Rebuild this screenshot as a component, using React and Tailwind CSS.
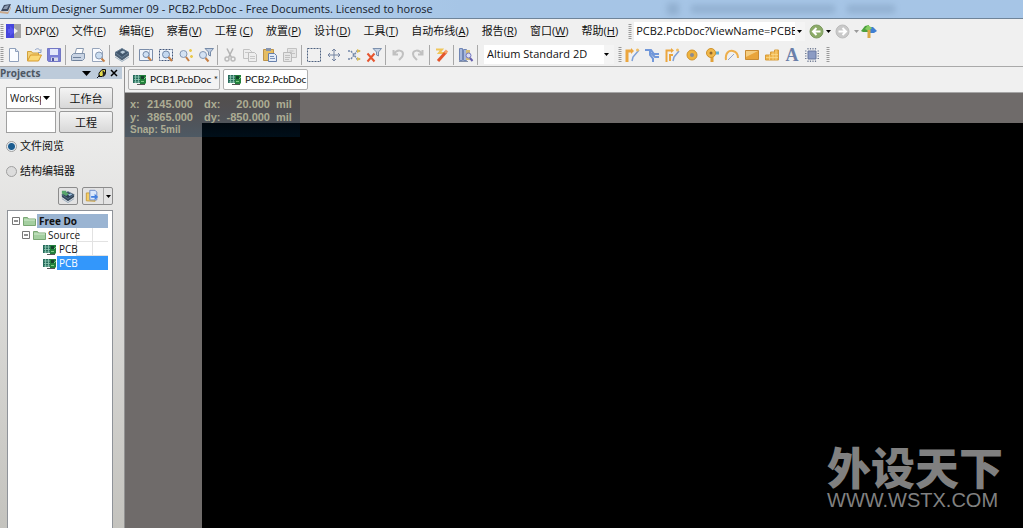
import { useState } from "react";

const icons = {
  newFile: (
    <>
      <path d="M3.500 1.500h6l3 3v10h-9z" fill="#fbfdff" stroke="#8fa0bb" />
      <path d="M9.500 1.500v3h3" fill="#d9e3f1" stroke="#8fa0bb" />
    </>
  ),
  open: (
    <>
      <path d="M1.500 13.500v-9h4l1 1.500h6v3" fill="#f3d27a" stroke="#d2a23c" />
      <path d="M1.500 14l3-6h11l-3 6z" fill="#fbd977" stroke="#d79a2d" />
      <path d="M9 3c2-2 4-1.500 5 .5l1-1v3h-3" fill="none" stroke="#8a9fc4" />
    </>
  ),
  save: (
    <>
      <path d="M1.500 1.500h13v13h-12l-1-1z" fill="#7b80d6" stroke="#7277c4" />
      <path d="M4 2h8v6H4z" fill="#e4e8fa" />
      <path d="M5 10.500h7V14H5z" fill="#d8dbe8" />
      <path d="M6 11h2v3H6z" fill="#5056a5" />
    </>
  ),
  print: (
    <>
      <path d="M5 7l1.500-5.500h7L12 7" fill="#fff" stroke="#8797ae" />
      <path d="M1.500 8.500l2-2h11v5l-2 2h-11z" fill="#c8d3e3" stroke="#8092aa" />
      <path d="M3 13.500h9M3 10.500h8" stroke="#6e819b" />
    </>
  ),
  preview: (
    <>
      <path d="M2.500 1.500h7l3 3v10h-10z" fill="#f8fafe" stroke="#97a5bb" />
      <circle cx="9" cy="8.500" r="3.500" fill="#c9dcf0" stroke="#8496b0" />
      <path d="M11.500 11.500l3 3" stroke="#c67f44" strokeWidth="2" />
    </>
  ),
  layers: (
    <>
      <path d="M1 8.500l7 5 7-5v-3H1z" fill="#4d6175" />
      <path d="M1 10l7 4.500 7-4.500" fill="none" stroke="#a1b4c4" />
      <path d="M1 5.500L8 1.500l7 4-7 5z" fill="#41566c" stroke="#6a8197" />
      <path d="M6 5l3-1.500 2.500 1.500L8.500 7z" fill="#b8cad9" />
    </>
  ),
  compile: (
    <>
      <path d="M1 9l7 5 7-5V6H1z" fill="#34485c" />
      <path d="M1 11l7 4.500 7-4.500" fill="none" stroke="#8fa4b8" />
      <path d="M1 6.500L8 3l7 3.500-7 4.500z" fill="#2c3f55" stroke="#5d7389" />
      <path d="M1 2h5v2l3 1-3 3-5-3z" fill="#58a56c" />
      <path d="M8 6l3-1 2 1.500L9.500 8z" fill="#9ec3e2" />
    </>
  ),
  zoomDoc: (
    <>
      <path d="M1.500 2.500h13v11h-13z" fill="#eef3fa" stroke="#7a8daa" />
      <path d="M11.500 2.500v11" stroke="#b4c1d4" />
      <circle cx="8" cy="7.500" r="3" fill="#cfe0f3" stroke="#7288a8" />
      <path d="M10 10l3 3.500" stroke="#c67f44" strokeWidth="2" />
    </>
  ),
  zoomArea: (
    <>
      <path d="M1.500 2.500h13v11h-13z" fill="#eef3fa" stroke="#42567a" strokeDasharray="2 1" />
      <circle cx="8" cy="7.500" r="3.500" fill="#c4d8ef" stroke="#7288a8" />
      <path d="M10.500 10l3.500 4" stroke="#c67f44" strokeWidth="2" />
    </>
  ),
  zoomPoint: (
    <>
      <circle cx="5.500" cy="7" r="3.500" fill="#d4e2f3" stroke="#8396b3" />
      <path d="M8 10l3 4" stroke="#c67f44" strokeWidth="2" />
      <path d="M11 3.500h3M12.500 2v3M12 9.500h3M13.500 8v3" stroke="#e9c94f" strokeWidth="1.500" />
    </>
  ),
  zoomFilter: (
    <>
      <circle cx="5" cy="8" r="3.500" fill="#d4e2f3" stroke="#8396b3" />
      <path d="M7.500 11l3 3.500" stroke="#c67f44" strokeWidth="2" />
      <path d="M7 1.500h8.500L12.500 5v4l-2-1V5z" fill="#bccbdf" stroke="#768ba9" />
    </>
  ),
  cut: (
    <>
      <path d="M5 1.500l4.500 9M11 1.500l-4.500 9" stroke="#b3b3b3" strokeWidth="1.500" />
      <circle cx="5" cy="12" r="2" fill="none" stroke="#bbb" strokeWidth="1.500" />
      <circle cx="11" cy="12" r="2" fill="none" stroke="#bbb" strokeWidth="1.500" />
    </>
  ),
  copy: (
    <>
      <path d="M1.500 2.500h6l2 2v7h-8z" fill="#eee" stroke="#c2c2c2" />
      <path d="M6.500 5.500h6l2 2v7h-8z" fill="#eee" stroke="#bdbdbd" />
      <path d="M8 9.500h5M8 11.500h5M3 5.500h3" stroke="#c9c9c9" />
    </>
  ),
  paste: (
    <>
      <path d="M1.500 2.500h10v11h-10z" fill="#e5bd62" stroke="#bd9348" />
      <path d="M4 1h5v3H4z" fill="#8795ae" />
      <path d="M6.500 6.500h6l2 2v6h-8z" fill="#e4ecf8" stroke="#6780ac" />
      <path d="M8 9.500h4M8 11.500h5" stroke="#7890b9" />
    </>
  ),
  pasteArray: (
    <>
      <path d="M5.500 1.500h9v9h-9z" fill="#e6e6e6" stroke="#c2c2c2" />
      <path d="M1.500 5.500h8v9h-8z" fill="#e6e6e6" stroke="#bbb" />
      <path d="M7.500 4h4M8 6.500h5M3 8.500h5M3 10.500h5M3 12.500h4" stroke="#c1c1c1" />
    </>
  ),
  select: <path d="M1.500 1.500h13v13h-13z" fill="none" stroke="#4f6280" strokeDasharray="2 1" />,
  move: (
    <path
      d="M8 2v12M2 8h12M6 4l2-2 2 2M6 12l2 2 2-2M4 6L2 8l2 2M12 6l2 2-2 2"
      fill="none"
      stroke="#7584a0"
    />
  ),
  deselect: (
    <>
      <path d="M2 4h3l6 8h3M2 12h3l6-8h3" fill="none" stroke="#7187a8" strokeWidth="1.500" strokeDasharray="2 1" />
      <path d="M11 2l4 2-4 2M11 10l4 2-4 2" fill="#d8bd58" />
    </>
  ),
  clearFilter: (
    <>
      <path d="M7 1.500h8.500L12.500 5v4l-2-1V5z" fill="#c4d2e4" stroke="#7d91ae" />
      <path d="M1.500 6.500l7 8M8.500 6.500l-7 8" stroke="#e6552f" strokeWidth="2" />
    </>
  ),
  undo: <path d="M3.500 3v4.500H8M4 7c3-5 9-4 9 0 0 3-2 4-4 6" fill="none" stroke="#c0c0c0" strokeWidth="2" />,
  redo: <path d="M12.500 3v4.500H8M12 7c-3-5-9-4-9 0 0 3 2 4 4 6" fill="none" stroke="#c0c0c0" strokeWidth="2" />,
  crossProbe: (
    <>
      <path d="M2 2.500h6L5 6h5" fill="none" stroke="#f0c65a" strokeWidth="2" />
      <path d="M4 14l8-9" stroke="#e3552c" strokeWidth="3" />
      <path d="M11 6l2-2.500" stroke="#f3a06c" strokeWidth="3" />
    </>
  ),
  browse: (
    <>
      <path d="M1.500 1.500h3v12h-3zM5.500 2.500h3v11h-3z" fill="#a8b8dc" stroke="#7086b5" />
      <path d="M8 3h4v10H8z" fill="#d4bd79" />
      <circle cx="10.500" cy="8.500" r="2.500" fill="#d9dcf8" stroke="#7075be" />
      <path d="M12 11l2.500 3" stroke="#655fad" strokeWidth="2" />
      <path d="M1 14.500h9" stroke="#8491aa" />
    </>
  ),
  route: (
    <>
      <path d="M3 15V4h4" fill="none" stroke="#eba63e" strokeWidth="3" />
      <path d="M8 14l1-4 6-7" fill="none" stroke="#7d9fd6" strokeWidth="1.500" />
      <path d="M7 1l3 3-3 3z" fill="#eba63e" />
      <circle cx="13.500" cy="3" r="1.500" fill="#efbd64" />
    </>
  ),
  diffRoute: (
    <path d="M1 3h6l3 4h5M6 3v5l3 3.500V15M7 6l4 4h4" fill="none" stroke="#7298da" strokeWidth="2" />
  ),
  multiRoute: (
    <>
      <path d="M2.500 15V3.500H7M6 14V8h3" fill="none" stroke="#eba63e" strokeWidth="2" />
      <path d="M9 14l1-4 5-6" fill="none" stroke="#7d9fd6" strokeWidth="1.500" />
      <path d="M7 1l3 2.500L7 6z" fill="#eba63e" />
      <circle cx="13.500" cy="3" r="1.500" fill="#efbd64" />
    </>
  ),
  pad: (
    <>
      <circle cx="8" cy="8" r="5" fill="#efb43e" stroke="#d0932f" />
      <circle cx="8" cy="8" r="2" fill="#8b8b92" />
    </>
  ),
  via: (
    <>
      <path d="M8 9v6" stroke="#e1a13a" strokeWidth="3" />
      <path d="M10 6h5" stroke="#61b0d7" strokeWidth="3" />
      <circle cx="7" cy="6" r="4.500" fill="#f1b84a" stroke="#cf932d" />
      <circle cx="7" cy="6" r="1.500" fill="#8f6730" />
    </>
  ),
  arc: (
    <>
      <path d="M2 13C1 6 5 3 9 4s5 3 5 7" fill="none" stroke="#edaf4d" strokeWidth="2" />
      <path d="M4 13l6-6" stroke="#91a6cf" />
    </>
  ),
  fill: (
    <>
      <path d="M1.500 3.500h13v9h-13z" fill="#e9a43a" stroke="#c98b32" />
      <path d="M2 4h12L2 10z" fill="#f5cd80" />
    </>
  ),
  polygon: (
    <>
      <path d="M1.500 13V8h5V5h4V3h4v10z" fill="#f0b54a" stroke="#d79c3b" />
      <path d="M2 10.500h12M5.500 8v5M9 5v8M12 3v10M7 7.500h7" stroke="#fbdb91" strokeWidth=".7" />
    </>
  ),
  component: (
    <>
      <path
        d="M4 1v14M6.500 1v14M9 1v14M11.500 1v14M1 4h14M1 6.500h14M1 9h14M1 11.500h14"
        stroke="#737e96"
        strokeWidth="1.200"
      />
      <path d="M2.500 2.500h11v11h-11z" fill="#f0f0f0" />
      <path d="M4 4h8v8H4z" fill="#8b9bc4" stroke="#66779f" />
    </>
  ),
  folderBlue: (
    <>
      <path d="M1.500 13.500v-9h4l1 1.500h5v8z" fill="#f5ce66" stroke="#c39839" />
      <path d="M5.500 1.500h6l2 2v9h-8z" fill="#dce8fb" stroke="#6585c5" />
      <path d="M7 8h4V5.500L15 9l-4 3.500V10H7z" fill="#427fe0" />
    </>
  ),
};

const Icon = ({ name, size = 16 }) => (
  <svg viewBox="0 0 16 16" width={size} height={size} fill="none" aria-hidden="true" className="shrink-0">
    {icons[name]}
  </svg>
);

const PcbIcon = () => (
  <svg viewBox="0 0 14 11" width="14" height="11" aria-hidden="true" className="shrink-0">
    <path d="M0 1h8v8H0z" fill="#276b5c" />
    <path d="M1 3h6M1 5.500h6M1 8h6M2.500 1v8M5.500 1v8" stroke="#8fc9b2" strokeWidth=".8" />
    <path d="M7 1h6v8l-1 1H7z" fill="#23803c" />
    <path d="M8 2h3v3H8z" fill="#14442c" />
    <path d="M11 5l2-2M8 7.500h3" stroke="#7fce86" />
    <path d="M4 10.500h8" stroke="#555" />
  </svg>
);

const FolderIcon = () => (
  <svg viewBox="0 0 13 11" width="13" height="11" aria-hidden="true" className="shrink-0">
    <path d="M.5 9.500v-8h4l1 1.500h7v6.500z" fill="#a4cfa0" stroke="#79a673" />
    <path d="M1 4h11" stroke="#d3ebcf" />
  </svg>
);

const Caret = ({ className = "text-black" }) => (
  <svg viewBox="0 0 5 3" width="5" height="3" aria-hidden="true" className={`shrink-0 ${className}`}>
    <path d="M0 0h5L2.500 3z" fill="currentColor" />
  </svg>
);

const Grip = () => (
  <svg width="4" height="15" aria-hidden="true" className="shrink-0">
    <path d="M2 0v15" stroke="#999" strokeWidth="3" strokeDasharray="1 1" />
  </svg>
);

const menus = [
  ["DXP", "X"],
  ["文件", "F"],
  ["编辑", "E"],
  ["察看", "V"],
  ["工程 ", "C"],
  ["放置", "P"],
  ["设计", "D"],
  ["工具", "T"],
  ["自动布线", "A"],
  ["报告", "R"],
  ["窗口", "W"],
  ["帮助", "H"],
];

const toolGroups = [
  ["newFile", "open", "save"],
  ["print", "preview"],
  ["layers"],
  ["zoomDoc", "zoomArea", "zoomPoint", "zoomFilter"],
  ["cut", "copy", "paste", "pasteArray"],
  ["select", "move", "deselect", "clearFilter"],
  ["undo", "redo"],
  ["crossProbe"],
  ["browse"],
];

const placeTools = ["route", "diffRoute", "multiRoute", "pad", "via", "arc", "fill", "polygon"];

const ToolButton = ({ name }) => (
  <button type="button" aria-label={name} className="flex h-5 w-5 items-center justify-center">
    <Icon name={name} />
  </button>
);

const TitleBar = () => (
  <header className="flex h-[19px] shrink-0 items-center justify-between border-b border-[#6f8499] bg-linear-to-r from-[#c3daf1] via-[#a6c5e6] via-45% to-[#a6c5e6]">
    <div className="flex items-center gap-[3px]">
      <svg viewBox="0 0 12 12" width="12" height="12" aria-hidden="true">
        <path d="M1 8l3-6 7-1-3 7z" fill="#3d4a60" />
        <path d="M3 6l2-3 4-1-2 4z" fill="#8b9ab0" />
        <path d="M0 8l8 1 3-6v2l-3 6-8-1z" fill="#c9a98c" />
      </svg>
      <h1 className="whitespace-nowrap text-[11px] text-[#15202b]">
        Altium Designer Summer 09 - PCB2.PcbDoc - Free Documents. Licensed to horose
      </h1>
    </div>
    <div className="mr-32 flex items-center gap-3 opacity-25 blur-[3px]" aria-hidden="true">
      <i className="h-3 w-3 bg-[#53708f]" />
      <i className="h-2 w-36 bg-[#53708f]" />
      <i className="h-2 w-12 bg-[#53708f]" />
    </div>
  </header>
);

const MenuBar = () => (
  <div className="flex h-6 shrink-0 items-center">
    <Grip />
    <svg viewBox="0 0 16 14" width="16" height="14" aria-hidden="true" className="ml-0.5 shrink-0">
      <path d="M0 0h8v14H0z" fill="#4646dc" />
      <path d="M8 0h7v14H8z" fill="#a5a5a5" />
      <path d="M4 2l5 5-5 5V9H2V5h2z" fill="#5858ee" />
      <path d="M8 4l4 3-4 3z" fill="#f0f0f0" />
    </svg>
    <nav className="ml-[3px] flex gap-[13px]">
      {menus.map(([label, key]) => (
        <button key={key} type="button" className="whitespace-pre">
          {label}(<u>{key}</u>)
        </button>
      ))}
    </nav>
    <div className="ml-2.5 flex items-center">
      <Grip />
      <div className="ml-0.5 flex h-[19px] w-[171px] items-center bg-white">
        <input
          aria-label="Address"
          defaultValue="PCB2.PcbDoc?ViewName=PCBEditor"
          className="ml-0.5 w-[159px] min-w-0 outline-none"
        />
        <button type="button" aria-label="Address list" className="flex h-full flex-1 items-center bg-[#f4f4f4] pl-0.5">
          <Caret />
        </button>
      </div>
      <button type="button" aria-label="Back" className="ml-1">
        <svg viewBox="0 0 15 15" width="15" height="15" aria-hidden="true">
          <circle cx="7.500" cy="7.500" r="6.500" fill="#8cab68" stroke="#7d9b60" />
          <path d="M11.500 7.500h-7M7.500 4l-3.500 3.500L7.500 11" fill="none" stroke="#fff" strokeWidth="2" />
        </svg>
      </button>
      <button type="button" aria-label="Back history" className="ml-0.5 py-2"><Caret /></button>
      <button type="button" aria-label="Forward" className="ml-1">
        <svg viewBox="0 0 15 15" width="15" height="15" aria-hidden="true">
          <circle cx="7.500" cy="7.500" r="6.500" fill="#c9c9c9" stroke="#bcbcbc" />
          <path d="M3.500 7.500h7M7.500 4l3.500 3.500L7.500 11" fill="none" stroke="#fff" strokeWidth="2" />
        </svg>
      </button>
      <button type="button" aria-label="Forward history" className="ml-1 py-2">
        <Caret className="text-[#999]" />
      </button>
      <button type="button" aria-label="Home" className="ml-0.5">
        <svg viewBox="0 0 16 14" width="16" height="14" aria-hidden="true">
          <path d="M0 7l4-5 4-1v7H2z" fill="#4ba03e" />
          <path d="M8 3h4l4 4-3 2H8z" fill="#3f7fd2" />
          <path d="M4 5l3-4 4 3-3 3z" fill="#86cc62" />
          <path d="M6.500 6h3v8h-3z" fill="#d9a945" />
        </svg>
      </button>
    </div>
  </div>
);

const ToolBar = () => (
  <div className="flex h-6 shrink-0 items-center border-b border-[#a9a9a9]">
    <Grip />
    {toolGroups.map((group, i) => (
      <div key={i} className="flex items-center">
        {group.map((name) => (
          <ToolButton key={name} name={name} />
        ))}
        <span className="mr-0.5 ml-px h-5 w-px bg-[#a8a8a8]" />
      </div>
    ))}
    <div className="relative ml-1">
      <select
        aria-label="View configuration"
        className="h-[19px] w-[130px] appearance-none bg-white pl-[3px] outline-none"
      >
        <option>Altium Standard 2D</option>
      </select>
      <span className="pointer-events-none absolute inset-y-0 right-0 flex w-2.5 items-center bg-[#f4f4f4]">
        <Caret />
      </span>
    </div>
    <div className="ml-1 flex items-center">
      <Grip />
      {placeTools.map((name) => (
        <ToolButton key={name} name={name} />
      ))}
      <button
        type="button"
        aria-label="Place string"
        className="flex h-5 w-5 items-center justify-center font-['Liberation_Serif',serif] text-lg font-bold leading-5 text-[#6a7fa9]"
      >
        A
      </button>
      <ToolButton name="component" />
      <span className="ml-1 flex"><Grip /></span>
    </div>
  </div>
);

const Expander = () => (
  <svg viewBox="0 0 8 8" width="8" height="8" aria-hidden="true" className="shrink-0">
    <path d="M.5 .5h7v7h-7z" fill="#fff" stroke="#777" />
    <path d="M2 4h4" stroke="#222" />
  </svg>
);

const cells = (
  <>
    <span className="w-4 shrink-0 border-r border-b border-[#e2e2e2]" />
    <span className="w-[15px] shrink-0 border-b border-[#e2e2e2]" />
  </>
);

const ProjectTree = () => (
  <ul
    role="tree"
    aria-label="Projects"
    className="mt-[5px] ml-px flex-1 border border-b-0 border-[#8f9399] bg-white pt-[3px] pr-1 pl-1 text-[10px] leading-[14px]"
  >
    <li role="treeitem" aria-expanded="true" className="flex h-3.5 items-center gap-[3px]">
      <Expander />
      <FolderIcon />
      <span className="-ml-0.5 h-full flex-1 bg-[#9ab4d2] pl-0.5 font-bold whitespace-nowrap">Free Do</span>
    </li>
    <li role="treeitem" aria-expanded="true" className="flex h-3.5 items-center pl-2.5">
      <Expander />
      <span className="ml-[3px]"><FolderIcon /></span>
      <span className="min-w-0 flex-1 border-r border-[#e2e2e2] pl-0.5">Source</span>
      <span className="flex self-stretch">{cells}</span>
    </li>
    <li role="treeitem" className="flex h-3.5 items-center pl-[31px]">
      <PcbIcon />
      <span className="min-w-0 flex-1 border-r border-[#e2e2e2] pl-0.5">PCB</span>
      <span className="flex self-stretch">{cells}</span>
    </li>
    <li role="treeitem" aria-selected="true" className="flex h-3.5 items-center pl-[31px]">
      <PcbIcon />
      <span className="h-full flex-1 bg-[#3397fb] pl-0.5 text-white">PCB</span>
    </li>
  </ul>
);

const panelButton =
  "h-[22px] flex-1 rounded-xs border border-[#999] bg-linear-to-b from-[#f4f4f4] to-[#d8d8d8] leading-none";

const ProjectsPanel = () => {
  const [view, setView] = useState("files");

  return (
    <aside className="flex w-[125px] shrink-0 flex-col border-r border-[#929292] bg-linear-to-b from-[#f2f2f2] to-[#c4c3be]">
      <div className="mr-0.5 flex h-3 items-center bg-[#bdcbda]">
        <h2 className="flex-1 text-[10px] leading-3 font-bold text-[#4d5763] font-['Open_Sans',sans-serif]">Projects</h2>
        <button type="button" aria-label="Panel menu">
          <svg viewBox="0 0 9 5" width="9" height="5" aria-hidden="true"><path d="M0 0h9L4.500 5z" /></svg>
        </button>
        <button type="button" aria-label="Pin" className="ml-1.5">
          <svg viewBox="0 0 9 9" width="9" height="9" aria-hidden="true">
            <path d="M2 4l3-3.500h3.500v4L5 7.500H2z" fill="#e2da4c" stroke="#111" />
            <path d="M5.500 1l3 3v2L6 8z" fill="#222" />
            <path d="M0 9l3-3" stroke="#111" />
          </svg>
        </button>
        <button type="button" aria-label="Close" className="mx-1">
          <svg viewBox="0 0 8 8" width="8" height="8" aria-hidden="true">
            <path d="M1 1l6 6M7 1l-6 6" stroke="#000" strokeWidth="1.500" />
          </svg>
        </button>
      </div>

      <div className="flex flex-1 flex-col pt-2 pr-[11px] pl-1.5">
        <div className="flex gap-[3px]">
          <div className="relative">
            <select
              aria-label="Workspace"
              className="h-[22px] w-[50px] appearance-none border border-[#a0a0a0] bg-white pr-3.5 pl-[3px] text-[10px] outline-none"
            >
              <option>Workspace1.DsnWrk</option>
            </select>
            <span className="pointer-events-none absolute inset-y-0 right-1.5 flex items-center">
              <svg viewBox="0 0 7 4" width="7" height="4" aria-hidden="true"><path d="M0 0h7L3.500 4z" /></svg>
            </span>
          </div>
          <button type="button" className={panelButton}>工作台</button>
        </div>
        <div className="mt-0.5 mb-[-3px] flex gap-[3px]">
          <input aria-label="Project" className="h-[22px] w-[50px] border border-[#a0a0a0] bg-white px-1 outline-none" />
          <button type="button" className={panelButton}>工程</button>
        </div>

        {[
          ["files", "文件阅览"],
          ["structure", "结构编辑器"],
        ].map(([value, label]) => (
          <label key={value} className="mt-[7px] flex h-[18px] items-center gap-[3px]">
            <input
              type="radio"
              name="view"
              checked={view === value}
              onChange={() => setView(value)}
              className="h-[11px] w-[11px] appearance-none rounded-full border border-[#a0a0a0] bg-[#dcdcdc] checked:bg-[radial-gradient(circle,#1b5c90_0_3px,#e8eef3_4px)]"
            />
            {label}
          </label>
        ))}

        <div className="mt-[7px] flex justify-end gap-1">
          <button
            type="button"
            aria-label="Compile"
            className="flex h-[18px] w-5 items-center justify-center rounded-xs border border-[#8c8c8c] bg-[#e3e3e3]"
          >
            <Icon name="compile" size={14} />
          </button>
          <button
            type="button"
            aria-label="Open project"
            className="flex h-[18px] w-[31px] items-center gap-1 rounded-xs border border-[#8c8c8c] bg-[#e3e3e3] pl-0.5"
          >
            <Icon name="folderBlue" size={14} />
            <span className="flex h-full items-center border-l border-[#aaa] pl-0.5"><Caret /></span>
          </button>
        </div>
        <ProjectTree />
      </div>
    </aside>
  );
};

const tabClass =
  "flex h-[21px] items-center gap-[3px] rounded-xs border border-[#b0b0b0] pr-px pl-1 font-['Lato',sans-serif] whitespace-nowrap";

const Editor = () => (
  <main className="flex min-w-0 flex-1 flex-col">
    <div className="flex h-[26px] shrink-0 items-center gap-[3px] border-b border-[#a5a5a5] pl-[3px] text-[10px]">
      <button type="button" className={`${tabClass} bg-[#f3f3f3]`}>
        <PcbIcon />
        PCB1.PcbDoc *
      </button>
      <button type="button" className={`${tabClass} bg-white`}>
        <PcbIcon />
        PCB2.PcbDoc
      </button>
    </div>
    <div className="relative flex flex-1 bg-[#6f6b6a] pt-[30px] pl-[77px]">
      <div className="flex-1 bg-black" />
      <div className="absolute top-0 left-0 bg-linear-to-b from-black/25 to-[#003055]/30 px-[5px] pt-[5px] pb-0.5 font-['Liberation_Sans',sans-serif] text-[11px] leading-[13px] font-bold text-[#adad94]">
        <div className="grid grid-cols-[14px_49px_28px_49px_25px]">
          <span>x:</span>
          <span className="text-right">2145.000</span>
          <span className="pl-[11px]">dx:</span>
          <span className="text-right">20.000</span>
          <span className="pl-1.5">mil</span>
          <span>y:</span>
          <span className="text-right">3865.000</span>
          <span className="pl-[11px]">dy:</span>
          <span className="text-right">-850.000</span>
          <span className="pl-1.5">mil</span>
        </div>
        <p className="text-[10px] leading-[11px]">Snap: 5mil</p>
      </div>
      <div className="absolute right-5 bottom-4 text-[#808080]">
        <p className="font-['Liberation_Sans','Noto_Sans_CJK_SC',sans-serif] text-[44px] leading-9 font-black">外设天下</p>
        <p className="font-['Liberation_Sans',sans-serif] text-xl leading-6">WWW.WSTX.COM</p>
      </div>
    </div>
  </main>
);

const App = () => {
  return (
    <div className="flex h-screen flex-col overflow-hidden bg-[#f0f0f0] font-['Open_Sans','Noto_Sans_CJK_SC',sans-serif] text-[11px] text-[#111]">
      <TitleBar />
      <MenuBar />
      <ToolBar />
      <div className="flex min-h-0 flex-1">
        <ProjectsPanel />
        <Editor />
      </div>
    </div>
  );
};

export default App;
